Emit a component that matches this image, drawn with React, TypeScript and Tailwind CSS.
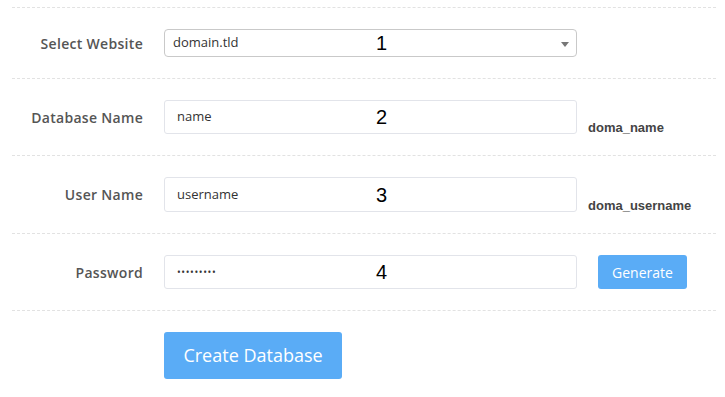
import { ReactNode } from 'react';

function Row({ label, children }: { label: string; children: ReactNode }) {
  return (
    <div className="flex items-center py-[21px] border-t border-dashed border-[#e2e2e2]">
      <div className="w-[131px] text-right text-[14px] font-semibold text-[#555] tracking-[0.3px]">{label}</div>
      <div className="ml-[21px] flex items-center">{children}</div>
    </div>
  );
}

function Mark({ n }: { n: string }) {
  return (
    <span className="absolute left-[211px] top-1/2 -translate-y-1/2 text-[20px] text-black font-['Liberation_Sans',Arial,sans-serif] leading-none">
      {n}
    </span>
  );
}

function Hint({ text }: { text: string }) {
  return (
    <span className="self-end mb-[-3px] ml-[11px] text-[13px] font-bold text-[#444] font-['Liberation_Sans',Arial,sans-serif]">
      {text}
    </span>
  );
}

export default function App() {
  return (
    <div className="w-[725px] h-[397px] bg-white font-['Open_Sans',sans-serif] pt-[7px]">
      <div className="mx-[12px] w-[704px]">
        <Row label="Select Website">
          <div className="relative w-[413px] h-[28px] border border-[#c9c9c9] rounded-[4px] flex items-center pl-[8px] text-[13px] text-[#333]">
            domain.tld
            <Mark n="1" />
            <svg className="absolute right-[7px] top-[12px]" width="8" height="5" viewBox="0 0 8 5">
              <path d="M0 0 L8 0 L4 5 Z" fill="#777" />
            </svg>
          </div>
        </Row>
        <Row label="Database Name">
          <div className="relative w-[413px] h-[34px] border border-[#e2e4ea] rounded-[3px] flex items-center pl-[12px] text-[13px] text-[#333]">
            name
            <Mark n="2" />
          </div>
          <Hint text="doma_name" />
        </Row>
        <Row label="User Name">
          <div className="relative w-[413px] h-[35px] border border-[#e2e4ea] rounded-[3px] flex items-center pl-[12px] text-[13px] text-[#333]">
            username
            <Mark n="3" />
          </div>
          <Hint text="doma_username" />
        </Row>
        <Row label="Password">
          <div className="relative w-[413px] h-[34px] border border-[#e2e4ea] rounded-[3px] flex items-center pl-[12px] text-[10px] tracking-[0.6px] text-[#333]">
            •••••••••
            <Mark n="4" />
          </div>
          <button className="ml-[21px] w-[89px] h-[34px] rounded-[3px] bg-[#5aacf6] text-white text-[14px]">
            Generate
          </button>
        </Row>
        <div className="border-t border-dashed border-[#e2e2e2] pt-[21px] pl-[152px]">
          <button className="w-[178px] h-[47px] rounded-[3px] bg-[#5aacf6] text-white text-[18px]">
            Create Database
          </button>
        </div>
      </div>
    </div>
  );
}
